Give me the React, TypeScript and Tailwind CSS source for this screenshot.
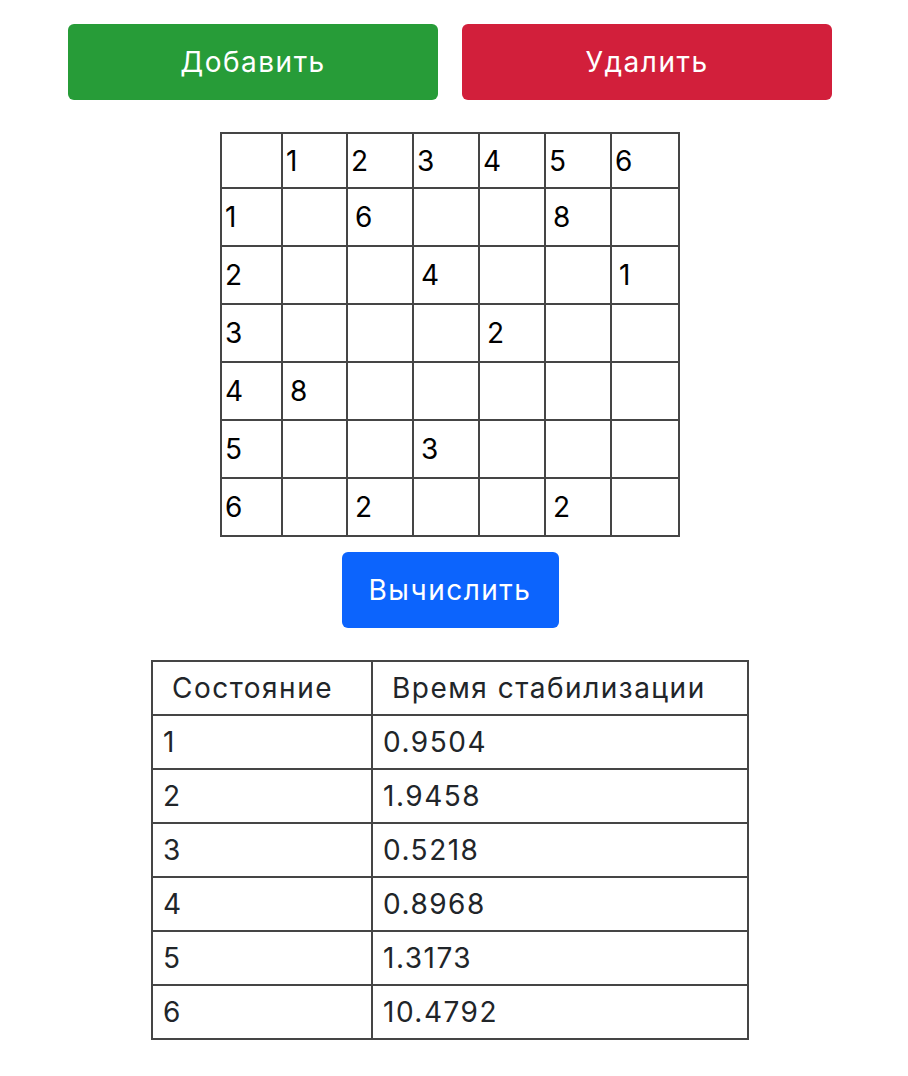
import React, { useState } from 'react';

/** 初期の行列データ（空文字は未入力） */
const INITIAL_MATRIX: string[][] = [
  ['', '6', '', '', '8', ''],
  ['', '', '4', '', '', '1'],
  ['', '', '', '2', '', ''],
  ['8', '', '', '', '', ''],
  ['', '', '3', '', '', ''],
  ['', '2', '', '', '2', ''],
];

const RESULTS = ['0.9504', '1.9458', '0.5218', '0.8968', '1.3173', '10.4792'];

const COL_WIDTHS = ['w-[61px]', 'w-[65px]', 'w-[66px]', 'w-[66px]', 'w-[66px]', 'w-[66px]', 'w-[68px]'];

const App: React.FC = () => {
  const [matrix, setMatrix] = useState<string[][]>(INITIAL_MATRIX);

  const handleChange = (r: number, c: number, value: string) => {
    const next = matrix.map((row) => [...row]);
    next[r][c] = value;
    setMatrix(next);
  };

  return (
    <div
      className="w-[900px] min-h-[1076px] bg-white flex flex-col items-center pt-[24px] tracking-[1.5px]"
      style={{ fontFamily: 'Inter, "Liberation Sans", sans-serif' }}
    >
      {/* ボタン行 */}
      <div className="w-full px-[68px] flex gap-[24px]">
        <button
          type="button"
          className="flex-1 h-[76px] rounded-[6px] bg-[#279c38] text-white text-[28px]"
        >
          Добавить
        </button>
        <button
          type="button"
          className="flex-1 h-[76px] rounded-[6px] bg-[#d21f3b] text-white text-[28px]"
        >
          Удалить
        </button>
      </div>

      {/* 行列 */}
      <table className="mt-[32px] border-collapse table-fixed text-[28px] text-black">
        <thead>
          <tr>
            {['', '1', '2', '3', '4', '5', '6'].map((h, i) => (
              <th
                key={i}
                className={`${COL_WIDTHS[i]} h-[55px] border-2 border-[#454545] px-[3px] text-left font-normal`}
              >
                {h}
              </th>
            ))}
          </tr>
        </thead>
        <tbody>
          {matrix.map((row, r) => (
            <tr key={r}>
              <td className="h-[58px] border-2 border-[#454545] px-[3px]">{r + 1}</td>
              {row.map((v, c) => (
                <td key={c} className="h-[58px] border-2 border-[#454545] p-0">
                  <input
                    className="w-full h-[54px] px-[7px] bg-transparent outline-none text-[28px] tracking-[1.5px]"
                    value={v}
                    onChange={(e) => handleChange(r, c, e.target.value)}
                  />
                </td>
              ))}
            </tr>
          ))}
        </tbody>
      </table>

      <button
        type="button"
        className="mt-[15px] w-[217px] h-[76px] rounded-[6px] bg-[#0c64fd] text-white text-[28px]"
      >
        Вычислить
      </button>

      {/* 結果 */}
      <table className="mt-[32px] border-collapse table-fixed text-[28px] text-[#212529]">
        <thead>
          <tr>
            <th className="w-[220px] h-[54px] border-2 border-[#454545] px-[19px] text-left font-normal">
              Состояние
            </th>
            <th className="w-[376px] h-[54px] border-2 border-[#454545] px-[19px] text-left font-normal">
              Время стабилизации
            </th>
          </tr>
        </thead>
        <tbody>
          {RESULTS.map((t, i) => (
            <tr key={i}>
              <td className="h-[54px] border-2 border-[#454545] px-[10px]">{i + 1}</td>
              <td className="h-[54px] border-2 border-[#454545] px-[10px]">{t}</td>
            </tr>
          ))}
        </tbody>
      </table>
    </div>
  );
};

export default App;
